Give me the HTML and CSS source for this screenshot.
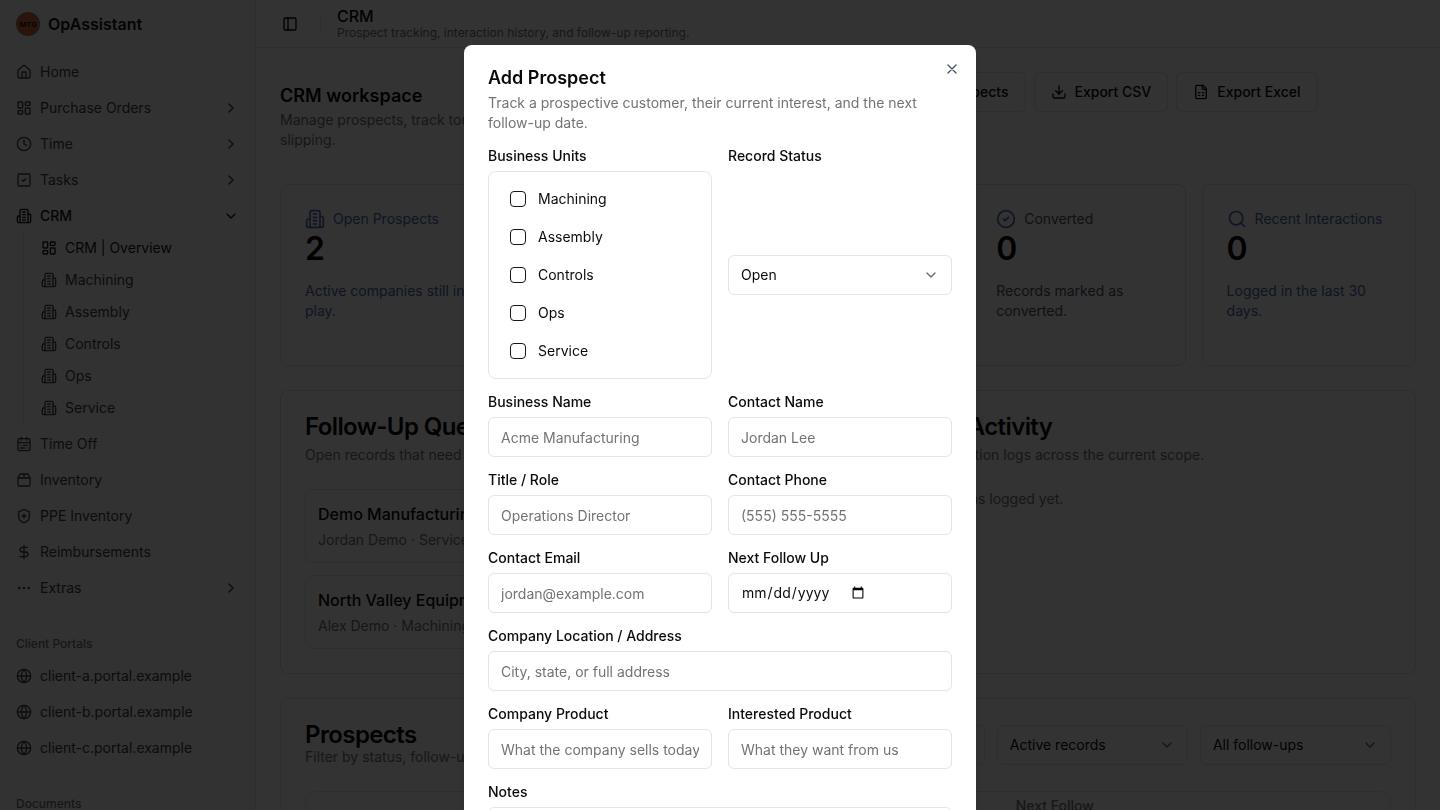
FILE: index.html
```
<!DOCTYPE html>
<html lang="en">
<head>
  <meta charset="UTF-8">
  <meta name="viewport" content="width=device-width, initial-scale=1.0">
  <title>CRM - OpAssistant</title>
  <link rel="stylesheet" href="styles.css">
</head>
<body>
  <!-- Icons -->
  <svg class="icon-defs" aria-hidden="true">
    <symbol id="i-home" viewBox="0 0 24 24"><path d="M15 21v-8a1 1 0 0 0-1-1h-4a1 1 0 0 0-1 1v8"/><path d="M3 10a2 2 0 0 1 .709-1.528l7-6a2 2 0 0 1 2.582 0l7 6A2 2 0 0 1 21 10v9a2 2 0 0 1-2 2H5a2 2 0 0 1-2-2z"/></symbol>
    <symbol id="i-dashboard" viewBox="0 0 24 24"><rect width="7" height="9" x="3" y="3" rx="1"/><rect width="7" height="5" x="14" y="3" rx="1"/><rect width="7" height="9" x="14" y="12" rx="1"/><rect width="7" height="5" x="3" y="16" rx="1"/></symbol>
    <symbol id="i-clock" viewBox="0 0 24 24"><circle cx="12" cy="12" r="10"/><path d="M12 6v6l4 2"/></symbol>
    <symbol id="i-tasks" viewBox="0 0 24 24"><rect width="18" height="18" x="3" y="3" rx="2"/><path d="m9 12 2 2 4-4"/></symbol>
    <symbol id="i-building" viewBox="0 0 24 24"><path d="M6 22V4a2 2 0 0 1 2-2h8a2 2 0 0 1 2 2v18Z"/><path d="M6 12H4a2 2 0 0 0-2 2v6a2 2 0 0 0 2 2h2"/><path d="M18 9h2a2 2 0 0 1 2 2v9a2 2 0 0 1-2 2h-2"/><path d="M10 6h4M10 10h4M10 14h4M10 18h4"/></symbol>
    <symbol id="i-calendar" viewBox="0 0 24 24"><rect width="18" height="18" x="3" y="4" rx="2"/><path d="M16 2v4M3 10h18M8 2v4M17 14h-6M13 18H7M7 14h.01M17 18h.01"/></symbol>
    <symbol id="i-package" viewBox="0 0 24 24"><path d="M12 3v6"/><path d="M16.76 3a2 2 0 0 1 1.8 1.1l2.23 4.479a2 2 0 0 1 .21.891V19a2 2 0 0 1-2 2H5a2 2 0 0 1-2-2V9.472a2 2 0 0 1 .211-.894L5.45 4.1A2 2 0 0 1 7.24 3z"/><path d="M3.054 9.013h17.893"/></symbol>
    <symbol id="i-shield" viewBox="0 0 24 24"><path d="M20 13c0 5-3.5 7.5-7.66 8.95a1 1 0 0 1-.67-.01C7.5 20.5 4 18 4 13V6a1 1 0 0 1 1-1c2 0 4.5-1.2 6.24-2.72a1.17 1.17 0 0 1 1.52 0C14.51 3.81 17 5 19 5a1 1 0 0 1 1 1z"/><path d="M9 12h6M12 9v6"/></symbol>
    <symbol id="i-dollar" viewBox="0 0 24 24"><path d="M12 2v20"/><path d="M17 5H9.5a3.5 3.5 0 0 0 0 7h5a3.5 3.5 0 0 1 0 7H6"/></symbol>
    <symbol id="i-dots" viewBox="0 0 24 24"><circle cx="12" cy="12" r="1"/><circle cx="19" cy="12" r="1"/><circle cx="5" cy="12" r="1"/></symbol>
    <symbol id="i-globe" viewBox="0 0 24 24"><circle cx="12" cy="12" r="10"/><path d="M12 2a14.5 14.5 0 0 0 0 20 14.5 14.5 0 0 0 0-20"/><path d="M2 12h20"/></symbol>
    <symbol id="i-right" viewBox="0 0 24 24"><path d="m9 18 6-6-6-6"/></symbol>
    <symbol id="i-down" viewBox="0 0 24 24"><path d="m6 9 6 6 6-6"/></symbol>
    <symbol id="i-panel" viewBox="0 0 24 24"><rect width="18" height="18" x="3" y="3" rx="2"/><path d="M9 3v18"/></symbol>
    <symbol id="i-download" viewBox="0 0 24 24"><path d="M12 15V3"/><path d="M21 15v4a2 2 0 0 1-2 2H5a2 2 0 0 1-2-2v-4"/><path d="m7 10 5 5 5-5"/></symbol>
    <symbol id="i-upload" viewBox="0 0 24 24"><path d="M12 3v12"/><path d="m17 8-5-5-5 5"/><path d="M21 15v4a2 2 0 0 1-2 2H5a2 2 0 0 1-2-2v-4"/></symbol>
    <symbol id="i-sheet" viewBox="0 0 24 24"><path d="M15 2H6a2 2 0 0 0-2 2v16a2 2 0 0 0 2 2h12a2 2 0 0 0 2-2V7Z"/><path d="M14 2v4a2 2 0 0 0 2 2h4"/><path d="M8 13h2M14 13h2M8 17h2M14 17h2"/></symbol>
    <symbol id="i-check" viewBox="0 0 24 24"><circle cx="12" cy="12" r="10"/><path d="m9 12 2 2 4-4"/></symbol>
    <symbol id="i-search" viewBox="0 0 24 24"><circle cx="11" cy="11" r="8"/><path d="m21 21-4.300-4.300"/></symbol>
    <symbol id="i-plus" viewBox="0 0 24 24"><path d="M5 12h14M12 5v14"/></symbol>
    <symbol id="i-close" viewBox="0 0 24 24"><path d="M18 6 6 18M6 6l12 12"/></symbol>
  </svg>

  <div class="app">
    <!-- Sidebar -->
    <aside class="sidebar">
      <div class="brand">
        <svg class="brand-logo" viewBox="0 0 24 24" role="img" aria-label="MTG">
          <circle cx="12" cy="12" r="12" fill="#8f8078"/>
          <circle cx="12" cy="12" r="11" fill="#cf653e"/>
          <text x="12" y="15" text-anchor="middle">MTG</text>
        </svg>
        <span>OpAssistant</span>
      </div>

      <nav class="nav-group">
        <a class="nav-item" href="#"><svg class="icon"><use href="#i-home"/></svg>Home</a>
        <a class="nav-item" href="#"><svg class="icon"><use href="#i-dashboard"/></svg>Purchase Orders<svg class="icon chevron"><use href="#i-right"/></svg></a>
        <a class="nav-item" href="#"><svg class="icon"><use href="#i-clock"/></svg>Time<svg class="icon chevron"><use href="#i-right"/></svg></a>
        <a class="nav-item" href="#"><svg class="icon"><use href="#i-tasks"/></svg>Tasks<svg class="icon chevron"><use href="#i-right"/></svg></a>
        <div>
          <a class="nav-item active" href="#"><svg class="icon"><use href="#i-building"/></svg>CRM<svg class="icon chevron"><use href="#i-down"/></svg></a>
          <div class="sub-nav">
            <a class="sub-item current" href="#"><svg class="icon"><use href="#i-dashboard"/></svg>CRM | Overview</a>
            <a class="sub-item" href="#"><svg class="icon"><use href="#i-building"/></svg>Machining</a>
            <a class="sub-item" href="#"><svg class="icon"><use href="#i-building"/></svg>Assembly</a>
            <a class="sub-item" href="#"><svg class="icon"><use href="#i-building"/></svg>Controls</a>
            <a class="sub-item" href="#"><svg class="icon"><use href="#i-building"/></svg>Ops</a>
            <a class="sub-item" href="#"><svg class="icon"><use href="#i-building"/></svg>Service</a>
          </div>
        </div>
        <a class="nav-item" href="#"><svg class="icon"><use href="#i-calendar"/></svg>Time Off</a>
        <a class="nav-item" href="#"><svg class="icon"><use href="#i-package"/></svg>Inventory</a>
        <a class="nav-item" href="#"><svg class="icon"><use href="#i-shield"/></svg>PPE Inventory</a>
        <a class="nav-item" href="#"><svg class="icon"><use href="#i-dollar"/></svg>Reimbursements</a>
        <a class="nav-item" href="#"><svg class="icon"><use href="#i-dots"/></svg>Extras<svg class="icon chevron"><use href="#i-right"/></svg></a>
      </nav>

      <nav class="nav-group">
        <div class="nav-label">Client Portals</div>
        <a class="nav-item" href="#"><svg class="icon"><use href="#i-globe"/></svg>client-a.portal.example</a>
        <a class="nav-item" href="#"><svg class="icon"><use href="#i-globe"/></svg>client-b.portal.example</a>
        <a class="nav-item" href="#"><svg class="icon"><use href="#i-globe"/></svg>client-c.portal.example</a>
      </nav>

      <nav class="nav-group">
        <div class="nav-label">Documents</div>
      </nav>
    </aside>

    <!-- Page -->
    <div class="main">
      <header class="topbar">
        <button class="panel-toggle" aria-label="Toggle sidebar"><svg class="icon"><use href="#i-panel"/></svg></button>
        <span class="divider"></span>
        <div>
          <h1>CRM</h1>
          <p>Prospect tracking, interaction history, and follow-up reporting.</p>
        </div>
      </header>

      <main class="content">
        <section class="workspace">
          <div class="workspace-text">
            <h2>CRM workspace</h2>
            <p class="muted">Manage prospects, track touchpoints, and keep them from slipping.</p>
          </div>
          <div class="actions">
            <button class="btn"><svg class="icon"><use href="#i-plus"/></svg>Add Prospect</button>
            <button class="btn"><svg class="icon"><use href="#i-upload"/></svg>Import Prospects</button>
            <button class="btn"><svg class="icon"><use href="#i-download"/></svg>Export CSV</button>
            <button class="btn"><svg class="icon"><use href="#i-sheet"/></svg>Export Excel</button>
            <button class="btn"><svg class="icon"><use href="#i-clock"/></svg>Log Interaction</button>
          </div>
        </section>

        <section class="stats">
          <div class="card stat blue">
            <div class="stat-label"><svg class="icon"><use href="#i-building"/></svg>Open Prospects</div>
            <div class="stat-value">2</div>
            <p>Active companies still in play.</p>
          </div>
          <div class="card stat">
            <div class="stat-label"><svg class="icon"><use href="#i-clock"/></svg>Overdue</div>
            <div class="stat-value">0</div>
            <p>Open records whose next follow-up date has already passed.</p>
          </div>
          <div class="card stat">
            <div class="stat-label"><svg class="icon"><use href="#i-calendar"/></svg>Due Soon</div>
            <div class="stat-value">2</div>
            <p>Follow-ups this week.</p>
          </div>
          <div class="card stat converted">
            <div class="stat-label"><svg class="icon"><use href="#i-check"/></svg>Converted</div>
            <div class="stat-value">0</div>
            <p>Records marked as converted.</p>
          </div>
          <div class="card stat blue recent">
            <div class="stat-label"><svg class="icon"><use href="#i-search"/></svg>Recent Interactions</div>
            <div class="stat-value">0</div>
            <p>Logged in the last 30 days.</p>
          </div>
        </section>

        <section class="panels">
          <div class="card queue">
            <h2>Follow-Up Queue</h2>
            <p class="muted">Open records that need attention next.</p>
            <div class="queue-list">
              <div class="queue-item">
                <h3>Demo Manufacturing</h3>
                <p class="muted">Jordan Demo · Service</p>
              </div>
              <div class="queue-item">
                <h3>North Valley Equipment</h3>
                <p class="muted">Alex Demo · Machining, Ops</p>
              </div>
            </div>
          </div>
          <div class="card activity">
            <h2>Recent Activity</h2>
            <p class="muted">Latest interaction logs across the current scope.</p>
            <p class="muted empty">No interactions logged yet.</p>
          </div>
        </section>

        <section class="card prospects">
          <div class="prospects-head">
            <div>
              <h2>Prospects</h2>
              <p class="muted">Filter by status, follow-up date, or search.</p>
            </div>
            <div class="filters">
              <input class="field" type="text" placeholder="Search prospects" aria-label="Search prospects">
              <div class="select-wrap">
                <select class="field" aria-label="Record filter"><option>Active records</option></select>
                <svg class="icon"><use href="#i-down"/></svg>
              </div>
              <div class="select-wrap">
                <select class="field" aria-label="Follow-up filter"><option>All follow-ups</option></select>
                <svg class="icon"><use href="#i-down"/></svg>
              </div>
            </div>
          </div>
          <div class="table-wrap">
            <table>
              <thead>
                <tr><th class="col-wide">Business</th><th class="col-wide">Contact</th><th class="col-next">Next Follow Up</th><th>Status</th></tr>
              </thead>
              <tbody>
                <tr><td>Demo Manufacturing</td><td>Jordan Demo</td><td>-</td><td>Open</td></tr>
              </tbody>
            </table>
          </div>
        </section>
      </main>
    </div>
  </div>

  <!-- Add Prospect dialog -->
  <div class="overlay">
    <form class="dialog" role="dialog" aria-labelledby="dialog-title">
      <button class="dialog-close" type="button" aria-label="Close"><svg class="icon"><use href="#i-close"/></svg></button>
      <div class="dialog-head">
        <h2 id="dialog-title">Add Prospect</h2>
        <p class="muted">Track a prospective customer, their current interest, and the next follow-up date.</p>
      </div>
      <div class="form-grid">
        <div class="form-row">
          <span class="label" id="units-label">Business Units</span>
          <div class="units" role="group" aria-labelledby="units-label">
            <label><input type="checkbox">Machining</label>
            <label><input type="checkbox">Assembly</label>
            <label><input type="checkbox">Controls</label>
            <label><input type="checkbox">Ops</label>
            <label><input type="checkbox">Service</label>
          </div>
        </div>
        <div class="form-row status-row">
          <label class="label" for="status">Record Status</label>
          <div class="select-wrap">
            <select class="field" id="status"><option>Open</option><option>Converted</option></select>
            <svg class="icon"><use href="#i-down"/></svg>
          </div>
        </div>
        <div class="form-row">
          <label class="label" for="business">Business Name</label>
          <input class="field" id="business" type="text" placeholder="Acme Manufacturing">
        </div>
        <div class="form-row">
          <label class="label" for="contact">Contact Name</label>
          <input class="field" id="contact" type="text" placeholder="Jordan Lee">
        </div>
        <div class="form-row">
          <label class="label" for="role">Title / Role</label>
          <input class="field" id="role" type="text" placeholder="Operations Director">
        </div>
        <div class="form-row">
          <label class="label" for="phone">Contact Phone</label>
          <input class="field" id="phone" type="tel" placeholder="(555) 555-5555">
        </div>
        <div class="form-row">
          <label class="label" for="email">Contact Email</label>
          <input class="field" id="email" type="email" placeholder="jordan@example.com">
        </div>
        <div class="form-row">
          <label class="label" for="next">Next Follow Up</label>
          <input class="field" id="next" type="date">
        </div>
        <div class="form-row full">
          <label class="label" for="address">Company Location / Address</label>
          <input class="field" id="address" type="text" placeholder="City, state, or full address">
        </div>
        <div class="form-row">
          <label class="label" for="product">Company Product</label>
          <input class="field" id="product" type="text" placeholder="What the company sells today">
        </div>
        <div class="form-row">
          <label class="label" for="interest">Interested Product</label>
          <input class="field" id="interest" type="text" placeholder="What they want from us">
        </div>
        <div class="form-row full">
          <label class="label" for="notes">Notes</label>
          <textarea class="field" id="notes"></textarea>
        </div>
      </div>
    </form>
  </div>
</body>
</html>
```
FILE: styles.css
```
/* General Styles */
* {
  box-sizing: border-box;
}

body {
  margin: 0;
  font-family: Inter, "Liberation Sans", sans-serif;
  font-size: 14px;
  line-height: 20px;
  color: #0a0a0a;
  background: #fff;
}

body, .overlay {
  overflow: hidden;
}

h1, h2, h3, p {
  margin: 0;
}

a {
  color: inherit;
  text-decoration: none;
}

button, input, select, textarea {
  font: inherit;
  color: inherit;
}

.icon-defs {
  display: none;
}

.icon {
  width: 16px;
  height: 16px;
  flex-shrink: 0;
  fill: none;
  stroke: currentColor;
  stroke-width: 2;
  stroke-linecap: round;
  stroke-linejoin: round;
}

.muted {
  color: #737373;
}

.app {
  display: flex;
  height: 100vh;
  overflow: hidden;
}

/* Sidebar */
.sidebar {
  width: 256px;
  flex-shrink: 0;
  display: flex;
  flex-direction: column;
  gap: 8px;
  background: #fafafa;
  border-right: 1px solid #e5e5e5;
  color: #404040;
}

.brand {
  display: flex;
  flex-shrink: 0;
  align-items: center;
  gap: 8px;
  height: 48px;
  margin-bottom: -8px;
  padding: 0 16px;
  font-size: 16px;
  font-weight: 600;
  color: #171717;
}

.brand-logo {
  width: 24px;
  height: 24px;
}

.brand-logo text {
  font-family: Roboto, sans-serif;
  font-size: 8px;
  font-weight: 700;
  fill: #2a1c18;
}

.nav-group {
  display: flex;
  flex-shrink: 0;
  flex-direction: column;
  gap: 4px;
  padding: 8px;
}

.nav-label {
  height: 32px;
  margin-bottom: -4px;
  padding: 0 8px;
  font-size: 12px;
  font-weight: 500;
  line-height: 32px;
  color: #737373;
}

.nav-item {
  display: flex;
  align-items: center;
  gap: 8px;
  height: 32px;
  padding: 0 8px;
}

.nav-item.active {
  font-weight: 500;
  color: #171717;
}

.chevron {
  margin-left: auto;
}

.sub-nav {
  display: flex;
  flex-direction: column;
  gap: 4px;
  margin-left: 15px;
  padding: 2px 0 2px 9px;
  border-left: 1px solid #e5e5e5;
}

.sub-item {
  display: flex;
  align-items: center;
  gap: 8px;
  height: 28px;
  padding: 0 8px;
}

.sub-item.current {
  color: #171717;
}

/* Top bar */
.main {
  flex: 1;
  min-width: 0;
}

.topbar {
  display: flex;
  align-items: center;
  gap: 16px;
  height: 48px;
  padding: 0 20px;
  border-bottom: 1px solid #e5e5e5;
}

.topbar h1 {
  font-size: 16px;
  font-weight: 500;
  line-height: 18px;
}

.topbar p {
  font-size: 12px;
  line-height: 16px;
  color: #737373;
}

.panel-toggle {
  display: flex;
  padding: 6px;
  border: none;
  background: none;
}

.divider {
  width: 1px;
  height: 16px;
  background: #e5e5e5;
}

/* Content */
.content {
  display: flex;
  flex-direction: column;
  gap: 24px;
  padding: 24px;
}

.workspace {
  display: flex;
  align-items: center;
  gap: 16px;
}

.workspace-text {
  flex: 1;
}

.workspace h2 {
  font-size: 18px;
  font-weight: 600;
  line-height: 28px;
}

.actions {
  display: flex;
  flex-wrap: wrap;
  flex-shrink: 0;
  gap: 8px;
  width: 720px;
}

.btn {
  display: flex;
  align-items: center;
  gap: 8px;
  height: 40px;
  padding: 0 16px;
  border: 1px solid #e5e5e5;
  border-radius: 6px;
  background: #fff;
  font-weight: 500;
}

.card {
  padding: 24px;
  border: 1px solid #e5e5e5;
  border-radius: 8px;
  background: #fff;
}

.card h2 {
  font-size: 24px;
  font-weight: 600;
  line-height: 24px;
  letter-spacing: -0.025em;
}

/* Stats */
.stats {
  display: grid;
  grid-template-columns: repeat(5, 1fr);
  gap: 16px;
}

.stat {
  border-color: #dde5ea;
  color: #525252;
}

.stat.blue {
  color: #4a68b0;
}

.stat.converted {
  border-color: #d3dfe6;
  color: #475569;
}

.stat.converted .icon {
  color: #4a68b0;
}

.stat.recent {
  border-color: #e2e5e8;
}

.stat-label {
  display: flex;
  align-items: center;
  gap: 8px;
}

.stat-label .icon {
  width: 20px;
  height: 20px;
}

.stat-value {
  margin-bottom: 12px;
  font-size: 32px;
  font-weight: 600;
  line-height: 40px;
  color: #0a0a0a;
}

/* Queue and activity */
.panels {
  display: grid;
  grid-template-columns: 1fr 1fr;
  gap: 24px;
}

.panels h2 {
  margin-bottom: 6px;
}

.queue {
  border-color: #e6e4cc;
}

.queue-list {
  display: flex;
  flex-direction: column;
  gap: 12px;
  margin-top: 24px;
}

.queue-item {
  padding: 12px;
  border: 1px solid #e5e5e5;
  border-radius: 8px;
}

.queue-item h3 {
  margin-bottom: 4px;
  font-size: 16px;
  font-weight: 500;
  line-height: 24px;
}

.empty {
  margin-top: 24px;
}

/* Prospects */
.prospects {
  border-color: #dde5ea;
}

.prospects-head {
  display: flex;
  align-items: center;
  justify-content: space-between;
}

.filters {
  display: grid;
  grid-template-columns: repeat(3, 1fr);
  gap: 12px;
  width: 55%;
}

.table-wrap {
  margin-top: 24px;
  border: 1px solid #e5e5e5;
  border-radius: 12px;
}

table {
  width: 100%;
  table-layout: fixed;
  border-collapse: collapse;
}

th {
  height: 48px;
  padding: 0 16px;
  font-weight: 500;
  text-align: left;
  color: #737373;
}

td {
  padding: 16px;
  border-top: 1px solid #e5e5e5;
}

.col-wide {
  width: 32%;
}

.col-next {
  width: 12%;
}

/* Form controls */
.field {
  display: flex;
  width: 100%;
  height: 40px;
  margin: 0;
  padding: 8px 12px;
  border: 1px solid #e5e5e5;
  border-radius: 6px;
  background: #fff;
}

.field::placeholder {
  color: #737373;
}

select.field {
  appearance: none;
}

textarea.field {
  height: 96px;
  resize: none;
}

.select-wrap {
  position: relative;
}

.select-wrap .icon {
  position: absolute;
  top: 12px;
  right: 13px;
  opacity: 0.6;
  pointer-events: none;
}

/* Dialog */
.overlay {
  position: fixed;
  inset: 0;
  display: flex;
  align-items: flex-start;
  justify-content: center;
  padding-top: 45px;
  background: rgba(0, 0, 0, 0.8);
}

.dialog {
  position: relative;
  width: 100%;
  max-width: 512px;
  padding: 24px;
  border-radius: 8px;
  background: #fff;
  box-shadow: 0 10px 15px rgba(0, 0, 0, 0.1);
}

.dialog-head {
  margin-bottom: 16px;
}

.dialog-head h2 {
  margin-bottom: 6px;
  font-size: 18px;
  font-weight: 600;
  line-height: 18px;
}

.dialog-close {
  position: absolute;
  top: 16px;
  right: 16px;
  display: flex;
  padding: 0;
  border: none;
  background: none;
  color: #475569;
}

.form-grid {
  display: grid;
  grid-template-columns: 1fr 1fr;
  gap: 16px;
}

.form-row {
  display: flex;
  flex-direction: column;
  gap: 8px;
  min-width: 0;
}

.form-row.full {
  grid-column: span 2;
}

.label {
  font-weight: 500;
  line-height: 14px;
}

.status-row .select-wrap {
  margin: auto 0;
}

.units {
  display: flex;
  flex-direction: column;
  gap: 8px;
  padding: 12px;
  border: 1px solid #e5e5e5;
  border-radius: 8px;
}

.units label {
  display: flex;
  align-items: center;
  gap: 12px;
  height: 30px;
  padding: 0 9px;
}

.units input {
  appearance: none;
  width: 16px;
  height: 16px;
  margin: 0;
  border: 1px solid #171717;
  border-radius: 4px;
}
```
